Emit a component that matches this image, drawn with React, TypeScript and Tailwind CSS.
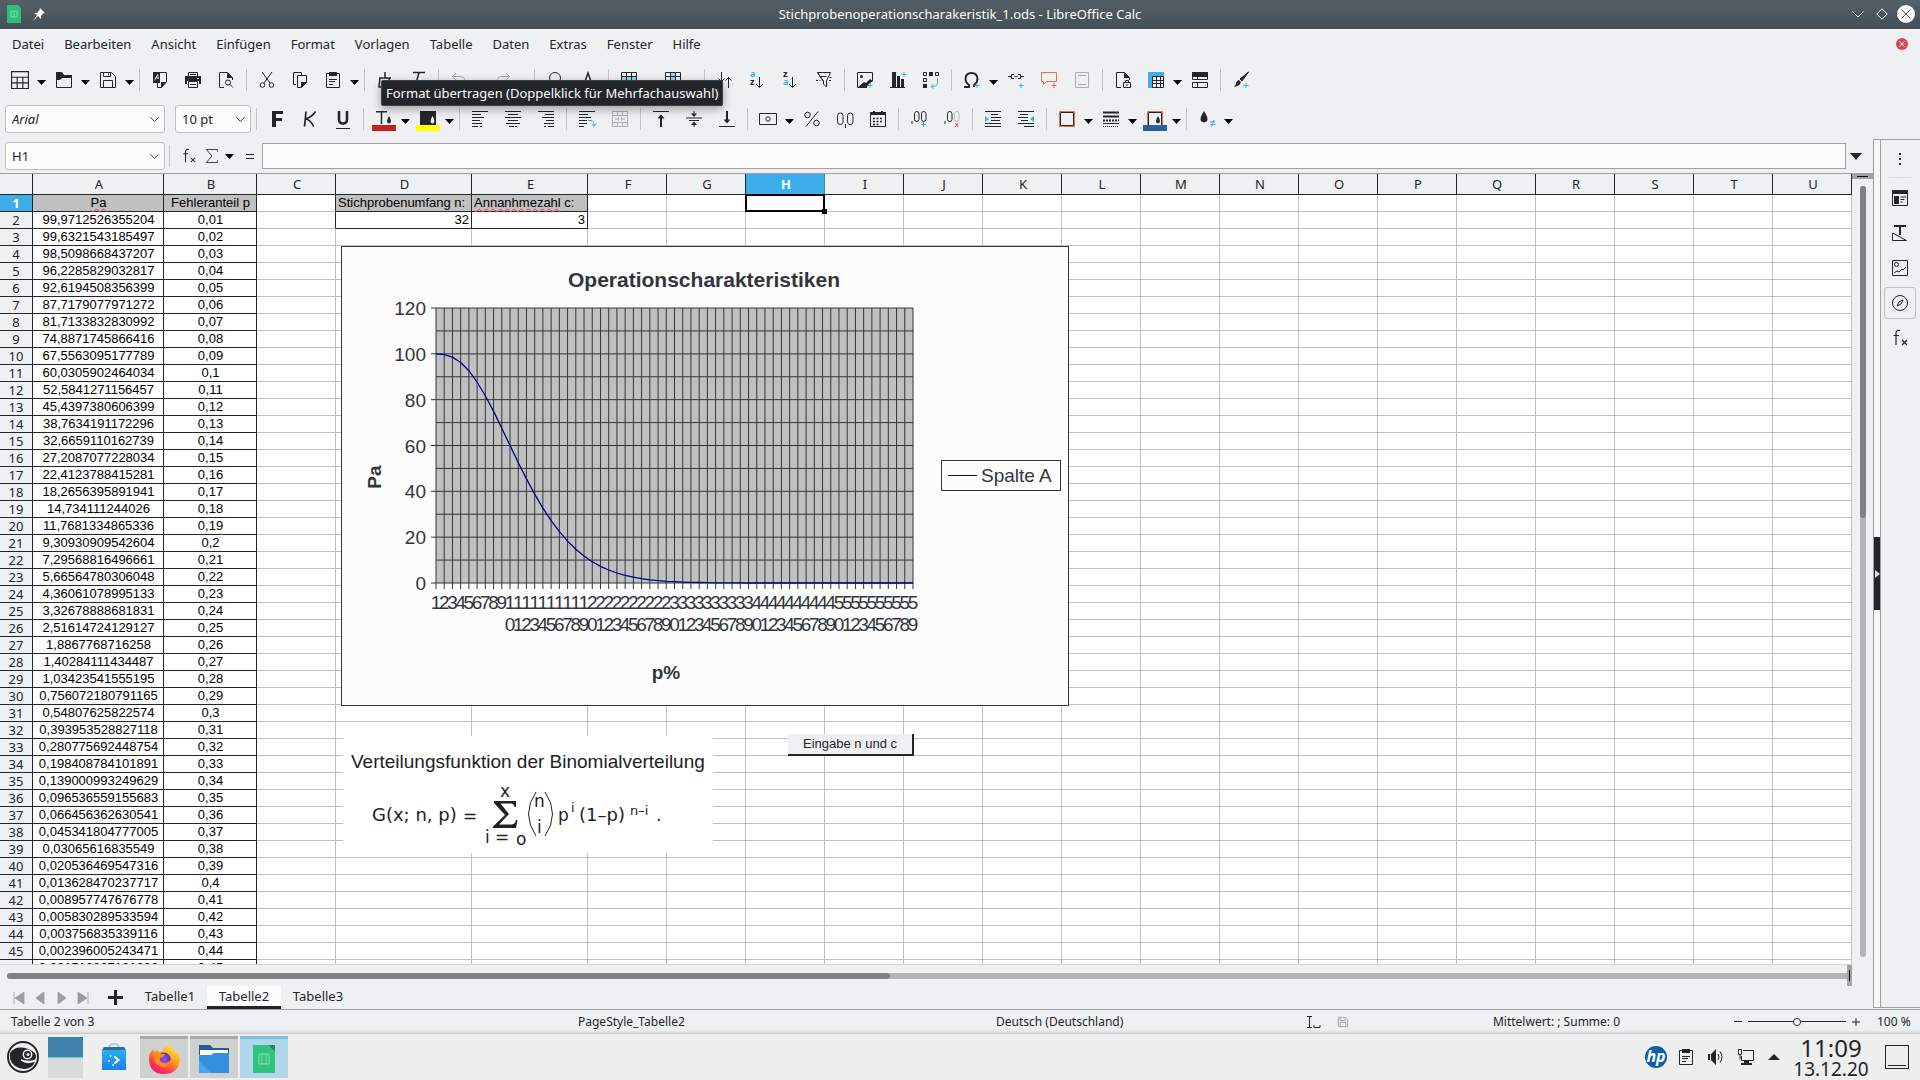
import type { ReactNode } from "react";
import { clsx } from "clsx";
import { ChevronDown } from "lucide-react";

const INK = "#232629";
const BLUE = "#3daee9";
const ORANGE = "#e9704a";

const paValues = [
  "99,9712526355204", "99,6321543185497", "98,5098668437207", "96,2285829032817", "92,6194508356399",
  "87,7179077971272", "81,7133832830992", "74,8871745866416", "67,5563095177789", "60,0305902464034",
  "52,5841271156457", "45,4397380606399", "38,7634191172296", "32,6659110162739", "27,2087077228034",
  "22,4123788415281", "18,2656395891941", "14,734111244026", "11,7681334865336", "9,30930909542604",
  "7,29568816496661", "5,66564780306048", "4,36061078995133", "3,32678888681831", "2,51614724129127",
  "1,8867768716258", "1,40284111434487", "1,03423541555195", "0,756072180791165", "0,54807625822574",
  "0,393953528827118", "0,280775692448754", "0,198408784101891", "0,139000993249629", "0,096536559155683",
  "0,066456362630541", "0,045341804777005", "0,03065616835549", "0,020536469547316", "0,013628470237717",
  "0,008957747676778", "0,005830289533594", "0,003756835339116", "0,002396005243471", "0,001512867121296",
];

const columns = "ABCDEFGHIJKLMNOPQRSTU".split("");
const rows = Array.from({ length: 46 }, (_, i) => i + 1);

function columnWidth(col: string) {
  if (col === "A") return "w-[131px]";
  if (col === "B") return "w-[93px]";
  if (col === "D") return "w-[136px]";
  if (col === "E") return "w-[116px]";
  return "w-[79px]";
}

/* ---------- icons ---------- */

function Ic({ children, size = 16, color = INK }: { children: ReactNode; size?: number; color?: string }) {
  return (
    <svg width={size} height={size} viewBox="0 0 16 16" fill="none" stroke={color} className="shrink-0 overflow-visible" aria-hidden="true">
      {children}
    </svg>
  );
}

const plus = <path d="M10.5 13.5h5M13 11v5" stroke={BLUE} />;

const ico = {
  newSheet: <Ic size={18}><path d="M.5.5h15v15H.5zM.5 5.5h15M.5 10.5h15M5.5 5.5v10M10.5 5.5v10" /></Ic>,
  open: <Ic><path d="M.5 1v14.5h15v-12h-8L5.5.5H.5z" /><path d="M0 0h6l2 3h8v3H6L4 8H1z" fill={INK} stroke="none" /></Ic>,
  save: <Ic><path d="M.5.5h11l4 4v11H.5zM3.5.5v4h7v-4M3.5 15.5v-7h9v7M8.5 1.5v2" /></Ic>,
  pdf: <Ic><path d="M5.5.5h9v9l-5 6h-4v-5" /><path d="M1 0h7v11H1z" fill={INK} stroke="none" /><path d="M2.5 8.5l3-6 1 4-3-1" stroke="#fff" strokeWidth="0.8" /><path d="M9 10h6l-6 6z" fill={INK} stroke="none" /></Ic>,
  print: <Ic><path d="M3.5 4V.5h9V4M5 2.5h6" /><path d="M0 4h16v8h-2V9H2v3H0z" fill={INK} stroke="none" /><path d="M3.5 9.5h9v6h-9zM5 12.5h6" /><path d="M12 6.5h2" stroke="#fff" /></Ic>,
  preview: <Ic><path d="M6 15.5H1.5V.5h8l5 5V8" /><path d="M9 0l6 6H9z" fill={INK} stroke="none" /><circle cx="10" cy="10.5" r="2.5" /><path d="M12 12.5l3 3" /></Ic>,
  cut: <Ic><path d="M3 0l8 11M13 0L5 11" /><circle cx="3.5" cy="13" r="2.3" /><circle cx="12.5" cy="13" r="2.3" /></Ic>,
  copy: <Ic><path d="M4 12.5H1.5V.5h8V3" /><path d="M5.5 3.5h9v7l-5 5h-4z" /><path d="M9 10h6l-6 6z" fill={INK} stroke="none" /></Ic>,
  paste: <Ic><path d="M1.5 1.5h13v14h-13zM4 7.5h8M4 9.5h6M4 12.5h4" /><path d="M4 0h8v4H4z" fill={INK} stroke="none" /></Ic>,
  clone: <Ic><path d="M8 0v6M2 6h12M3 6l-1 9h11l-1-9" strokeWidth="1.5" /></Ic>,
  clear: <Ic><path d="M3 .5h12M9 .5L5 15" strokeWidth="1.5" /></Ic>,
  undo: <Ic color="#a9abad"><path d="M5 1L1.5 4.5 5 8M2 4.5h7q5 0 5 5v3" /></Ic>,
  redo: <Ic color="#a9abad"><path d="M11 1l3.5 3.5L11 8M14 4.5H7q-5 0-5 5v3" /></Ic>,
  find: <Ic><circle cx="8" cy="6" r="5.5" /><path d="M12 10l4 5" /></Ic>,
  spell: <Ic><path d="M3 15L8 1l5 14M5 9h6" strokeWidth="1.5" /></Ic>,
  row: <Ic><path d="M1 5h14v4H1z" fill="#9bd3f0" stroke="none" /><path d="M.5.5h15v15H.5zM.5 4.5h15M.5 9.5h15M5.5.5v15M10.5.5v15" /></Ic>,
  col: <Ic><path d="M5 1h6v14H5z" fill="#9bd3f0" stroke="none" /><path d="M.5.5h15v15H.5zM.5 4.5h15M.5 9.5h15M5.5.5v15M10.5.5v15" /></Ic>,
  sort: <Ic><path d="M4.5 0v9M1.5 6.5l3 3 3-3M11.5 16V5M8.5 8.5l3-3 3 3" /></Ic>,
  az: <Ic><text x="0" y="5" fontSize="9" fontWeight="700" fill={BLUE} stroke="none" fontFamily="Noto Sans, sans-serif">a</text><text x="0" y="13" fontSize="9" fontWeight="700" fill={INK} stroke="none" fontFamily="Noto Sans, sans-serif">z</text><path d="M9.5 5v10M6 12l3.5 3.5L13 12" /></Ic>,
  za: <Ic><text x="0" y="5" fontSize="9" fontWeight="700" fill={INK} stroke="none" fontFamily="Noto Sans, sans-serif">z</text><text x="0" y="13" fontSize="9" fontWeight="700" fill={BLUE} stroke="none" fontFamily="Noto Sans, sans-serif">a</text><path d="M9.5 5v10M6 12l3.5 3.5L13 12" /></Ic>,
  filter: <Ic><path d="M1.5.5h13L10.5 9v6l-3-3V9zM1.500.500L7 9M4.5 4.500h6" /><path d="M0 8.5h2M3.5 8.5h1M13 8.5h2M13.5 5.5h2" /></Ic>,
  image: <Ic><path d="M10 15.5H.5V.5h15V9" /><path d="M1 15l6-5 2 1 4-4 3 2-4 3-2 3z" fill={INK} stroke="none" /><circle cx="4.5" cy="4.5" r="1.5" fill={INK} stroke="none" />{plus}</Ic>,
  chart: <Ic><path d="M0 15.5h15" /><path d="M2 0h4v15H2zM7 4h3v11H7zM11 7h3v8h-3z" fill={INK} stroke="none" /><path d="M11.5 2.5h5M14 0v5" stroke={BLUE} /></Ic>,
  pivot: <Ic><path d="M.5.5h3v3h-3zM12.5.5h3v3h-3zM.5 6.5h3v3h-3z" /><path d="M6 0h4v4H6zM0 12h4v4H0z" fill={INK} stroke="none" /><path d="M14.5 6v5q0 3.5-6 3.5M10.5 12L8 14.5 10.5 16.5" stroke={BLUE} /></Ic>,
  omega: <Ic><path d="M0 15h5v-2Q1.5 10.5 1.5 6.5 2 1 7.5 1T13.5 6.500Q13.5 10.500 10 13v2" strokeWidth="1.9" />{plus}</Ic>,
  link: <Ic><path d="M0 4.5h3M6.5 4.5h3M13 4.5h3M6 2.5H3.5v4H6M10 2.5h2.5v4H10" />{plus}</Ic>,
  comment: <Ic color={ORANGE}><path d="M.5.5h15v9H5.5l-3 3v-3h-2z" /><path d="M10.5 13.5h5M13 11v5" /></Ic>,
  header: <Ic color="#a9abad"><path d="M1.5.5h13v15h-13zM4 3.5h8M4 12.5h8" /></Ic>,
  protect: <Ic><path d="M6 15.5H1.5V.5h8l5 5V8" /><path d="M9 0l6 6H9z" fill={INK} stroke="none" /><path d="M8.5 10.5h7v5h-7zM10.5 10V8.5h3V10M12 12v2" /></Ic>,
  freeze: <Ic><path d="M0 0h16v5H5v11H0z" fill={BLUE} stroke="none" /><path d="M4.5 4.5h11v11h-11zM4.5 8.5h11M4.5 11.5h11M8.5 4.5v11M12.5 4.5v11" /></Ic>,
  split: <Ic><path d="M0 0h16v5H0z" fill={INK} stroke="none" /><path d="M.5 5v2.5h15V5M5.5 5v2.5M.5 10.5h15v5H.5zM5.5 10.5v5" /></Ic>,
  brush: <Ic><path d="M15.5 0L7 7l2 2z" fill={INK} strokeLinejoin="round" /><path d="M6 8l2 2q-1 4-7 5 2-2 2-4t3-3z" fill={INK} stroke="none" />{plus}</Ic>,

  bold: <Ic><path d="M3 0h11v3H7v4h6v3H7v6H3z" fill={INK} stroke="none" /></Ic>,
  italic: <Ic><path d="M4 .5L2.5 15.500M13.5.5Q10 6 3.5 8 8 8 11.5 15.500" strokeWidth="1.7" /></Ic>,
  underline: <Ic><path d="M4 0v8q0 4.500 4 4.500t4-4.500V0" strokeWidth="2.5" /><path d="M1 17.5h14" /></Ic>,
  fontColor: <Ic><path d="M0 .8h11M5.5 1v12" strokeWidth="1.5" /><path d="M13 5q4 7 0 7.5-4-.5 0-7.5z" fill={INK} stroke="none" /><path d="M-4 14h24v6H-4z" fill="#c9211e" stroke="none" /></Ic>,
  highlight: <Ic><path d="M0 0h16v14H0z" fill={INK} stroke="none" /><path d="M12.5 5q4 7 0 7.5-4-.5 0-7.5z" fill="#eee" stroke="none" /><path d="M-4 14h24v6H-4z" fill="#ffff00" stroke="none" /></Ic>,
  left: <Ic><path d="M0 .5h16M0 3.5h9M0 6.5h12M0 9.5h8M0 12.5h10M0 15.5h6M8 15.5h2" /></Ic>,
  center: <Ic><path d="M0 .5h16M3 3.5h10M0 6.5h16M3 9.5h10M1 12.5h14M4 15.5h5M10 15.5h2" /></Ic>,
  right: <Ic><path d="M0 .5h16M7 3.5h9M4 6.5h12M8 9.5h8M6 12.5h10M6 15.5h2M10 15.5h6" /></Ic>,
  wrap: <Ic><path d="M0 .5h16M0 3.5h9M0 6.5h12M0 9.5h8M0 12.5h8M0 15.5h5" /><path d="M9 9.5h3q3 0 3 5M12.5 12.5l2.5 3 2-3" stroke={BLUE} /></Ic>,
  merge: <Ic color="#a9abad"><path d="M.5.5h15v15H.5zM.5 4.5h15M.5 11.5h15M5.5.5v4M10.5.5v4M5.5 11.5v4M10.5 11.5v4M3 8h3M10 8h3M6.5 6v4M9.5 6v4" /></Ic>,
  top: <Ic><path d="M0 .5h16" /><path d="M8 4v12" strokeWidth="2" /><path d="M4.5 7.5L8 3.500l3.5 4z" fill={INK} stroke="none" /></Ic>,
  middle: <Ic><path d="M0 7h16M3 9.5h10M8 0v4M8 12v4" /><path d="M5 2.5h6L8 6zM5 14h6l-3-3.5z" fill={INK} stroke="none" /></Ic>,
  bottom: <Ic><path d="M0 15.5h16" /><path d="M8 0v10" strokeWidth="2" /><path d="M4.5 8.5h7L8 12.5z" fill={INK} stroke="none" /></Ic>,
  currency: <Ic><path d="M-.5 2.5h17v11h-17z" /><circle cx="8" cy="8" r="2.2" /></Ic>,
  percent: <Ic><circle cx="3.5" cy="4" r="2.8" /><circle cx="12.5" cy="12" r="2.8" /><path d="M14 .5L2 15.500" /></Ic>,
  number: <Ic><rect x=".5" y="2" width="5.5" height="11.5" rx="2.7" /><rect x="10.5" y="2" width="5.5" height="11.5" rx="2.7" /><path d="M8.5 13v4" /></Ic>,
  date: <Ic><path d="M.5 1.5h15v14H.5z" /><path d="M0 1h3V0h2v1h6V0h2v1h3v3H0z" fill={INK} stroke="none" /><path d="M3 7.5h10M3 10.5h10M3 13.5h6" strokeDasharray="2 1.5" strokeWidth="1.5" /></Ic>,
  addDec: <Ic><rect x="3.5" y=".5" width="4.5" height="10" rx="2.2" /><rect x="10.5" y=".5" width="4.5" height="10" rx="2.2" /><path d="M1 10v3" /><path d="M10 13.5h5M12.5 11v5" stroke={BLUE} /></Ic>,
  delDec: <Ic><rect x="3.5" y=".5" width="4.5" height="10" rx="2.2" /><rect x="10.5" y=".5" width="4.5" height="10" rx="2.2" stroke="#b5b7b9" /><path d="M1 10v3" /><path d="M11 12l3.5 4M14.5 12L11 16" stroke="#da4453" /></Ic>,
  indent: <Ic><path d="M0 .5h16M6 3.5h7M6 6.5h10M6 9.5h9M0 12.5h16M0 15.5h16" /><path d="M0 5v6l4-3z" fill={BLUE} stroke="none" /></Ic>,
  outdent: <Ic><path d="M0 .5h16M2 3.5h8M0 6.5h10M3 9.5h7M0 12.5h16M6 15.5h10" /><path d="M16 5v6l-4-3z" fill={BLUE} stroke="none" /></Ic>,
  border: <Ic><path d="M.5.5h15v15H.5z" stroke={ORANGE} /><path d="M1.5 1.5h13v13h-13z" /></Ic>,
  lineStyle: <Ic><path d="M0 1.5h16M0 5.5h16" strokeWidth="2" /><path d="M0 9.5h16" strokeDasharray="2 1" strokeWidth="2" /><path d="M0 12.5h16" /><path d="M0 15.5h16" strokeDasharray="1 1" /></Ic>,
  borderColor: <Ic><path d="M.5.5h15v15H.5z" stroke={ORANGE} /><path d="M1.5 1.5h13v13h-13z" /><path d="M11 5q4 7 0 7.5-4-.5 0-7.5z" fill={INK} stroke="none" /><path d="M-4 14h24v6H-4z" fill="#2a6099" stroke="none" /></Ic>,
  cond: <Ic><path d="M5 0q7 10.5 0 11.5Q-2 10.5 5 0z" fill={INK} stroke="none" /><path d="M11 11h5.5M11 13.5h5.5M15 9l-2.5 7" stroke={BLUE} /></Ic>,
};

type Tool = "|" | { icon: ReactNode; label: string; menu?: boolean };

const standardTools: Tool[] = [
  { icon: ico.newSheet, label: "Neu", menu: true }, { icon: ico.open, label: "Öffnen", menu: true },
  { icon: ico.save, label: "Speichern", menu: true }, "|",
  { icon: ico.pdf, label: "Als PDF exportieren" }, { icon: ico.print, label: "Drucken" }, { icon: ico.preview, label: "Druckvorschau" }, "|",
  { icon: ico.cut, label: "Ausschneiden" }, { icon: ico.copy, label: "Kopieren" }, { icon: ico.paste, label: "Einfügen", menu: true }, "|",
  { icon: ico.clone, label: "Format übertragen" }, { icon: ico.clear, label: "Formatierung löschen" }, "|",
  { icon: ico.undo, label: "Rückgängig", menu: true }, { icon: ico.redo, label: "Wiederherstellen", menu: true }, "|",
  { icon: ico.find, label: "Suchen und Ersetzen" }, { icon: ico.spell, label: "Rechtschreibung" }, "|",
  { icon: ico.row, label: "Zeile", menu: true }, { icon: ico.col, label: "Spalte", menu: true }, "|",
  { icon: ico.sort, label: "Sortieren" }, { icon: ico.az, label: "Aufsteigend" }, { icon: ico.za, label: "Absteigend" }, { icon: ico.filter, label: "AutoFilter" }, "|",
  { icon: ico.image, label: "Bild" }, { icon: ico.chart, label: "Diagramm" }, { icon: ico.pivot, label: "Pivot-Tabelle" }, "|",
  { icon: ico.omega, label: "Sonderzeichen", menu: true }, { icon: ico.link, label: "Hyperlink" }, { icon: ico.comment, label: "Kommentar" }, { icon: ico.header, label: "Kopf- und Fußzeilen" }, "|",
  { icon: ico.protect, label: "Druckbereich" }, { icon: ico.freeze, label: "Fixieren", menu: true }, { icon: ico.split, label: "Fenster teilen" }, "|",
  { icon: ico.brush, label: "Zeichenfunktionen" },
];

const formatTools: Tool[] = [
  "|", { icon: ico.bold, label: "Fett" }, { icon: ico.italic, label: "Kursiv" }, { icon: ico.underline, label: "Unterstrichen" }, "|",
  { icon: ico.fontColor, label: "Schriftfarbe", menu: true }, { icon: ico.highlight, label: "Hintergrundfarbe", menu: true }, "|",
  { icon: ico.left, label: "Linksbündig" }, { icon: ico.center, label: "Zentriert" }, { icon: ico.right, label: "Rechtsbündig" }, "|",
  { icon: ico.wrap, label: "Textumbruch" }, { icon: ico.merge, label: "Zellen verbinden" }, "|",
  { icon: ico.top, label: "Oben" }, { icon: ico.middle, label: "Mitte" }, { icon: ico.bottom, label: "Unten" }, "|",
  { icon: ico.currency, label: "Währung", menu: true }, { icon: ico.percent, label: "Prozent" }, { icon: ico.number, label: "Zahl" }, { icon: ico.date, label: "Datum" }, "|",
  { icon: ico.addDec, label: "Dezimalstelle hinzufügen" }, { icon: ico.delDec, label: "Dezimalstelle löschen" }, "|",
  { icon: ico.indent, label: "Einzug erhöhen" }, { icon: ico.outdent, label: "Einzug verringern" }, "|",
  { icon: ico.border, label: "Umrandung", menu: true }, { icon: ico.lineStyle, label: "Linienstil", menu: true }, { icon: ico.borderColor, label: "Linienfarbe", menu: true }, "|",
  { icon: ico.cond, label: "Bedingte Formatierung", menu: true },
];

function Triangle() {
  return (
    <svg width="10" height="5" viewBox="0 0 10 5" className="shrink-0 overflow-visible" aria-hidden="true">
      <path d="M0 0h9L4.5 5z" fill="#000" />
    </svg>
  );
}

function Tools({ items }: { items: Tool[] }) {
  return (
    <>
      {items.map((t, i) =>
        t === "|" ? (
          <div key={i} className="flex w-2 shrink-0 justify-center">
            <div className="h-[22px] w-px bg-[#c3c5c6]" />
          </div>
        ) : (
          <div key={i} className="flex shrink-0 items-center">
            <button type="button" aria-label={t.label} className="flex h-8 w-[33px] items-center justify-center">{t.icon}</button>
            {t.menu && (
              <button type="button" aria-label={`${t.label}, Auswahl`} className="flex h-8 w-[11px] items-center justify-center pt-1"><Triangle /></button>
            )}
          </div>
        )
      )}
    </>
  );
}

function Combo({ label, value, className, italic }: { label: string; value: string; className: string; italic?: boolean }) {
  return (
    <label className={clsx("relative shrink-0", className)}>
      <select aria-label={label} className={clsx("h-7 w-full appearance-none rounded-[3px] border border-[#bcbebf] bg-[#fcfcfc] pl-[6px]", italic && "italic")}>
        <option>{value}</option>
      </select>
      <ChevronDown size={15} strokeWidth={1.5} className="pointer-events-none absolute right-[3px] top-[7px]" />
    </label>
  );
}

/* ---------- window chrome ---------- */

function TitleBar() {
  return (
    <header className="relative flex h-[29px] shrink-0 items-center justify-center bg-linear-to-b from-[#556069] to-[#454e56] text-[#fcfcfc]">
      <div className="absolute left-[7px] top-[5px] flex items-center gap-3">
        <svg width="14" height="18" viewBox="0 0 14 18" aria-hidden="true">
          <path d="M0 0h11l3 3v15H0z" fill="#2cbf7c" />
          <path d="M4 6h6v6H4zM7 6v6" stroke="#7ddcab" fill="none" />
        </svg>
        <svg width="12" height="13" viewBox="0 0 12 13" aria-hidden="true">
          <path d="M7 0l5 5-2 .5-2 2.5V11L5 8l-5 5 4-6-3-2h3l2.5-3z" fill="#fff" />
        </svg>
      </div>
      <h1 className="pb-px text-[13px]">Stichprobenoperationscharakeristik_1.ods - LibreOffice Calc</h1>
      <div className="absolute right-[5px] top-[5px] flex items-center gap-[6px]">
        <button type="button" aria-label="Minimieren" className="flex size-[18px] items-center justify-center">
          <svg width="12" height="7" viewBox="0 0 12 7"><path d="M.5.5L6 6 11.5.5" fill="none" stroke="#fff" /></svg>
        </button>
        <button type="button" aria-label="Maximieren" className="flex size-[18px] items-center justify-center">
          <svg width="12" height="12" viewBox="0 0 12 12"><path d="M6 .8L11.2 6 6 11.2.8 6z" fill="none" stroke="#fff" /></svg>
        </button>
        <button type="button" aria-label="Schließen" className="flex size-[18px] items-center justify-center rounded-full bg-white">
          <svg width="10" height="10" viewBox="0 0 10 10"><path d="M.5.5l9 9M9.5.5l-9 9" stroke="#475057" /></svg>
        </button>
      </div>
    </header>
  );
}

function MenuBar() {
  const items = ["Datei", "Bearbeiten", "Ansicht", "Einfügen", "Format", "Vorlagen", "Tabelle", "Daten", "Extras", "Fenster", "Hilfe"];
  return (
    <nav className="flex h-[31px] shrink-0 items-center px-3 pb-px">
      <div className="flex gap-5">
        {items.map((m) => <button type="button" key={m}>{m}</button>)}
      </div>
      <button type="button" aria-label="Dokument schließen" className="ml-auto flex size-3 items-center justify-center rounded-full bg-[#da4453]">
        <svg width="6" height="6" viewBox="0 0 6 6"><path d="M.5.5l5 5M5.5.5l-5 5" stroke="#fff" /></svg>
      </button>
    </nav>
  );
}

/* ---------- sheet ---------- */

// word with the spell checker's red wave under it
function Misspelled({ children }: { children: string }) {
  return <span className="underline decoration-[#da4453] decoration-wavy decoration-1 underline-offset-1">{children}</span>;
}

function cellContent(row: number, col: string): ReactNode {
  if (row === 1) {
    if (col === "A") return <Misspelled>Pa</Misspelled>;
    if (col === "B") return "Fehleranteil p";
    if (col === "D") return "Stichprobenumfang n:";
    if (col === "E") return <><Misspelled>Annanhmezahl</Misspelled> c:</>;
    return null;
  }
  if (col === "A") return paValues[row - 2];
  if (col === "B") return String((row - 1) / 100).replace(".", ",");
  if (row === 2 && col === "D") return "32";
  if (row === 2 && col === "E") return "3";
  return null;
}

function Cell({ row, col }: { row: number; col: string }) {
  const inData = col === "A" || col === "B";
  const inParams = row <= 2 && (col === "D" || col === "E");
  const darkRight = inData || inParams || (row <= 2 && col === "C");
  return (
    <td
      className={clsx(
        "h-[17px] overflow-visible whitespace-nowrap border-b border-r py-0",
        inData || inParams ? "border-b-[#232629]" : "border-b-[#c0c0c0]",
        darkRight ? "border-r-[#232629]" : "border-r-[#c0c0c0]",
        inData && "pl-px pr-0 text-center",
        inParams && (row === 1 ? "pl-[2px] pr-0 text-left" : "pl-0 pr-[2px] text-right"),
        !inData && !inParams && "px-0",
        row === 1 && (inData || inParams) && "bg-[#c0c0c0]",
        row === 1 && col === "H" && "relative"
      )}
    >
      {cellContent(row, col)}
      {row === 1 && col === "H" && (
        <div className="absolute -bottom-px -left-px -right-px -top-px z-10 border-2 border-black">
          <div className="absolute -bottom-[4px] -right-[4px] size-[5px] bg-black" />
        </div>
      )}
    </td>
  );
}

function Grid() {
  return (
    <table className="w-[1852px] table-fixed border-separate border-spacing-0 bg-white font-['Liberation_Sans',Arial,sans-serif] text-[13px] leading-4 text-black">
      <thead className="font-['Noto_Sans',sans-serif] text-[#232629]">
        <tr className="h-[21px]">
          <th className="w-[33px] border-b border-r border-[#232629] bg-[#eff0f1] p-0" aria-label="Alles auswählen" />
          {columns.map((c) => (
            <th
              key={c}
              scope="col"
              className={clsx(
                "border-b border-r border-b-[#232629] py-0 pl-[2px] pr-0 leading-5",
                columnWidth(c),
                c === "H" ? "border-r-[#2f8fc4] bg-[#3daee9] font-bold text-white" : "border-r-[#232629] bg-[#eff0f1] font-normal"
              )}
            >
              {c}
            </th>
          ))}
        </tr>
      </thead>
      <tbody>
        {rows.map((r) => (
          <tr key={r} className="h-[17px]">
            <th
              scope="row"
              className={clsx(
                "border-b border-r border-[#232629] p-0 font-['Noto_Sans',sans-serif]",
                r === 1 ? "bg-[#3daee9] font-bold text-white" : "bg-[#eff0f1] font-normal text-[#232629]"
              )}
            >
              {r}
            </th>
            {columns.map((c) => <Cell key={c} row={r} col={c} />)}
          </tr>
        ))}
      </tbody>
    </table>
  );
}

// acceptance probability in percent: at most c defects in a sample of n
function acceptance(p: number, n = 32, c = 3) {
  let sum = 0;
  let binom = 1;
  for (let i = 0; i <= c; i++) {
    sum += binom * p ** i * (1 - p) ** (n - i);
    binom = (binom * (n - i)) / (i + 1);
  }
  return sum * 100;
}

const PLOT = { left: 95, right: 572, top: 62, bottom: 337 };
const STEPS = 58;
const plotX = (i: number) => PLOT.left + (i * (PLOT.right - PLOT.left)) / STEPS;
const plotY = (v: number) => PLOT.bottom - (v * (PLOT.bottom - PLOT.top)) / 120;

function Chart() {
  const ticks = Array.from({ length: STEPS + 1 }, (_, i) => i);
  const curve = ticks.map((i) => `${plotX(i).toFixed(1)},${plotY(acceptance((i + 1) / 100)).toFixed(1)}`).join(" ");
  return (
    <svg
      width="728"
      height="460"
      viewBox="0 0 728 460"
      role="img"
      aria-label="Operationscharakteristiken"
      className="absolute left-[341px] top-[72px] font-['Liberation_Sans',Arial,sans-serif] text-[19px]"
      fill="#31363b"
    >
      <rect x=".5" y=".5" width="727" height="459" fill="#fcfcfc" stroke="#31363b" />
      <text x="363" y="41" textAnchor="middle" fontSize="21" fontWeight="700">Operationscharakteristiken</text>
      <rect x={PLOT.left} y={PLOT.top} width={PLOT.right - PLOT.left} height={PLOT.bottom - PLOT.top} fill="#c0c0c0" />
      <g stroke="#31363b">
        {ticks.map((i) => <path key={i} d={`M${plotX(i)} ${PLOT.top}V${PLOT.bottom + 6}`} />)}
        {Array.from({ length: 13 }, (_, i) => (
          <path key={i} d={`M${i % 2 ? PLOT.left : PLOT.left - 5} ${plotY(i * 10)}H${PLOT.right}`} />
        ))}
      </g>
      {[0, 20, 40, 60, 80, 100, 120].map((v) => (
        <text key={v} x="85" y={plotY(v) + 7} textAnchor="end">{v}</text>
      ))}
      {ticks.map((i) => {
        const [first, second] = String(i + 1);
        return (
          <g key={i} textAnchor="middle">
            <text x={plotX(i)} y="363">{first}</text>
            {second && <text x={plotX(i)} y="385">{second}</text>}
          </g>
        );
      })}
      <polyline points={curve} fill="none" stroke="#000080" strokeWidth="1.3" />
      <text transform="translate(40 231) rotate(-90)" textAnchor="middle" fontWeight="700">Pa</text>
      <text x="325" y="433" textAnchor="middle" fontWeight="700">p%</text>
      <rect x="600.5" y="214.5" width="119" height="30" fill="#fcfcfc" stroke="#31363b" />
      <path d="M607 229.5h29" stroke="#000080" />
      <text x="640" y="236">Spalte A</text>
    </svg>
  );
}

function Formula() {
  return (
    <svg
      width="370"
      height="117"
      viewBox="0 0 370 117"
      role="img"
      aria-label="Verteilungsfunktion der Binomialverteilung"
      className="absolute left-[343px] top-[562px] bg-white font-['DejaVu_Sans','Noto_Sans',sans-serif] text-[17px]"
      fill="#222"
    >
      <text x="8" y="32" className="font-['Liberation_Sans',Arial,sans-serif] text-[19px]">Verteilungsfunktion der Binomialverteilung</text>
      <text x="29" y="85" fontSize="18">G(x; n, p)</text>
      <text x="120" y="86">=</text>
      <text x="157" y="61">x</text>
      <path d="M151 65h22v6h-1.5q-.5-3.500-4-3.500h-10L166 78l-10 10.5h12q4 0 5-4.500h1.5l-1.5 8h-23v-1.500L162 79 151 67z" />
      <g fontSize="17">
        <text x="142" y="107">i</text>
        <text x="152" y="107">=</text>
        <text x="173" y="109">o</text>
      </g>
      <path d="M193 56q-15 22 0 44M202 56q15 22 0 44" fill="none" stroke="#222" />
      <text x="191" y="71">n</text>
      <text x="194" y="97">i</text>
      <text x="215" y="85">p</text>
      <text x="228" y="76" fontSize="13">i</text>
      <text x="236" y="85" fontSize="18">(1–p)</text>
      <text x="287" y="79" fontSize="13">n–i</text>
      <text x="313" y="85">.</text>
    </svg>
  );
}

function VerticalScrollbar() {
  return (
    <div className="flex w-[21px] shrink-0 flex-col items-center">
      <div className="flex h-[6px] w-full items-center justify-center bg-[#a0a2a4]">
        <div className="h-px w-[11px] bg-black" />
      </div>
      <div className="mb-2 mt-[7px] w-[6px] flex-1 rounded-full bg-[#b2b4b5]">
        <div className="h-[43%] rounded-full bg-[#808183]" />
      </div>
    </div>
  );
}

function SheetTabs() {
  const arrows = ["M4 1v12M14 1v12L5 7z", "M12 1v12L4 7z", "M4 1v12l8-6z", "M12 1v12M2 1v12l9-6z"];
  const names = ["Erste Tabelle", "Vorherige Tabelle", "Nächste Tabelle", "Letzte Tabelle"];
  return (
    <div className="flex h-[23px] shrink-0 items-center pl-[7px]">
      {arrows.map((d, i) => (
        <button type="button" key={d} aria-label={names[i]} className="flex w-[22px] justify-center">
          <svg width="16" height="14" viewBox="0 0 16 14" fill="#9b9d9f" stroke="#9b9d9f" strokeWidth="0.8"><path d={d} /></svg>
        </button>
      ))}
      <button type="button" aria-label="Tabelle hinzufügen" className="ml-[13px] flex w-[15px] justify-center">
        <svg width="15" height="15" viewBox="0 0 15 15"><path d="M7.5 0v15M0 7.5h15" stroke={INK} strokeWidth="3" /></svg>
      </button>
      <div role="tablist" className="ml-[10px] flex h-full">
        {["Tabelle1", "Tabelle2", "Tabelle3"].map((t) => (
          <button
            type="button"
            role="tab"
            aria-selected={t === "Tabelle2"}
            key={t}
            className={clsx("h-full w-[74px] border-b-[3px] leading-5", t === "Tabelle2" ? "border-[#232629] bg-[#fcfcfc]" : "border-transparent")}
          >
            {t}
          </button>
        ))}
      </div>
    </div>
  );
}

function FxIcon({ size = 16 }: { size?: number }) {
  return <Ic size={size}><path d="M8 .5q-4-1-4 3V15M1.5 5.5H7M10 10l5 5M15 10l-5 5" strokeWidth="1.2" /></Ic>;
}

function Sidebar() {
  const decks = [
    { label: "Eigenschaften", icon: <Ic><path d="M.5.5h15v15H.5z" /><path d="M0 0h16v4H0zM2 6h5v8H2z" fill={INK} stroke="none" /><path d="M8.5 7h6M8.5 9.5h4M8.5 12h2" /></Ic> },
    { label: "Formatvorlagen", icon: <Ic><path d="M2 1h12M8 1v9" strokeWidth="2" /><path d="M.5 8v7.5h14z" /></Ic> },
    { label: "Galerie", icon: <Ic><path d="M.5.5h15v15H.5zM2 13l3-2 2 1 3-3 1 1 3-3" /><circle cx="4.5" cy="4.5" r="2" /></Ic> },
    { label: "Navigator", icon: <Ic><circle cx="8" cy="8" r="7.5" /><path d="M11 5L9 9l-4 2 2-4z" /></Ic>, active: true },
    { label: "Funktionen", icon: <FxIcon /> },
  ];
  return (
    <aside className="mb-px flex w-[47px] shrink-0 border-b border-t border-[#9fa1a3]">
      <div className="flex w-2 flex-col justify-center border-x border-[#9fa1a3] bg-[#f6f7f7]">
        <button type="button" aria-label="Seitenleiste ausblenden" className="flex h-[73px] items-center justify-center bg-[#232629]">
          <svg width="5" height="8" viewBox="0 0 5 8"><path d="M0 0l5 4-5 4z" fill="#ddd" /></svg>
        </button>
      </div>
      <div className="flex flex-1 flex-col items-center pr-px pt-[9px]">
        <button type="button" aria-label="Seitenleisteneinstellungen" className="flex h-5 items-center">
          <svg width="2" height="14" viewBox="0 0 2 14" fill={INK}><path d="M0 1h2v2H0zM0 6h2v2H0zM0 11h2v2H0z" /></svg>
        </button>
        <div className="mb-1 mt-2 h-px w-[22px] bg-[#dcdddf]" />
        <div className="flex flex-col gap-[3px]">
          {decks.map((d) => (
            <button
              type="button"
              key={d.label}
              aria-label={d.label}
              className={clsx("flex size-8 items-center justify-center rounded-[3px] border", d.active ? "border-[#bcbebf]" : "border-transparent")}
            >
              {d.icon}
            </button>
          ))}
        </div>
      </div>
    </aside>
  );
}

function StatusBar() {
  return (
    <footer className="relative z-10 flex h-[25px] shrink-0 items-center border-b border-t border-b-[#c9cbcb] border-t-[#9fa1a3] text-xs shadow-[inset_0_-3px_3px_-2px_rgba(0,0,0,0.12)]">
      <div className="w-[297px] pl-[11px]">Tabelle 2 von 3</div>
      <div className="w-[271px]" />
      <div className="w-[321px] pl-[10px]">PageStyle_Tabelle2</div>
      <div className="flex-1 pl-[107px]">Deutsch (Deutschland)</div>
      <button type="button" aria-label="Einfügemodus" className="flex w-[30px] justify-center">
        <Ic><path d="M2 2.5h5M2 13.5h5M4.5 2.5v11M9 11v2.5h6V11" /></Ic>
      </button>
      <button type="button" aria-label="Dokument gespeichert" className="flex w-[30px] justify-center">
        <Ic size={10} color="#a9abad"><path d="M.5.5h11l4 4v11H.5zM3.5.5v5h8v-5M3.5 15.5v-7h9v7" strokeWidth="1.6" /></Ic>
      </button>
      <div className="w-[30px]" />
      <div className="w-[337px] text-center">Mittelwert: ; Summe: 0</div>
      <div className="flex w-[143px] items-center justify-center gap-[6px]">
        <button type="button" aria-label="Verkleinern" className="h-px w-2 bg-[#232629]" />
        <input
          type="range"
          aria-label="Maßstab"
          defaultValue={50}
          className="h-px w-[98px] appearance-none bg-[#232629] [&::-webkit-slider-thumb]:size-2 [&::-webkit-slider-thumb]:appearance-none [&::-webkit-slider-thumb]:rounded-full [&::-webkit-slider-thumb]:border [&::-webkit-slider-thumb]:border-[#232629] [&::-webkit-slider-thumb]:bg-[#fcfcfc]"
        />
        <button type="button" aria-label="Vergrößern">
          <svg width="8" height="8" viewBox="0 0 8 8"><path d="M4 0v8M0 4h8" stroke={INK} /></svg>
        </button>
      </div>
      <div className="w-[52px] pl-[9px]">100 %</div>
    </footer>
  );
}

/* ---------- desktop panel ---------- */

function Geeko() {
  return (
    <svg width="32" height="32" viewBox="0 0 32 32" aria-hidden="true">
      <circle cx="16" cy="16" r="15" fill="#eff0f1" stroke={INK} strokeWidth="2" />
      <path d="M3 12q4-6 11-5.500 6 0 12 4 2.500 1 3 4.500 0 4-3 4.500-5 1.500-12-.5 4 5 14 2-3 7-11 7Q6 27 3 18z" fill={INK} />
      <circle cx="20.5" cy="13.5" r="4.2" fill={INK} stroke="#eff0f1" strokeWidth="1.5" />
      <circle cx="21" cy="13.5" r="1.5" fill="#eff0f1" />
      <path d="M14 19q6 2.500 14 .5" fill="none" stroke="#eff0f1" strokeWidth="1.5" />
    </svg>
  );
}

function Firefox() {
  return (
    <svg width="32" height="32" viewBox="0 0 32 32" aria-hidden="true">
      <defs>
        <linearGradient id="fx-flame" x1="0.8" y1="0" x2="0.2" y2="1">
          <stop offset="0" stopColor="#fff44f" />
          <stop offset="0.45" stopColor="#ff9a1f" />
          <stop offset="0.75" stopColor="#ff3750" />
          <stop offset="1" stopColor="#e31587" />
        </linearGradient>
        <radialGradient id="fx-globe">
          <stop offset="0" stopColor="#9059ff" />
          <stop offset="1" stopColor="#5b2fb5" />
        </radialGradient>
      </defs>
      <path d="M2 10l3-4 1 3 3-2 2 2 4-1q1-5 5-8 1 4 5 6l2 1q5 5 5 10Q30 31 16 31T1 17q0-4 1-7z" fill="url(#fx-flame)" />
      <circle cx="16" cy="16" r="6.5" fill="url(#fx-globe)" />
      <path d="M5 10q5-2 8 1h4q-1 3-5 4-1 4 4 5 4 0 6-3-1 8-8 7-9-2-9-14z" fill="#ff8a1f" />
    </svg>
  );
}

function CalcDoc() {
  return (
    <svg width="22" height="28" viewBox="0 0 22 28" aria-hidden="true">
      <path d="M0 0h15l7 7v21H0z" fill="#2fc380" />
      <path d="M15 0h7v7z" fill="#1f8b61" />
      <path d="M6 9h10v10H6zM9 9v10M13 9v10" fill="none" stroke="#86dfb2" />
    </svg>
  );
}

function Taskbar() {
  return (
    <div className="flex h-[46px] shrink-0 items-center bg-[#edeeed] pl-[7px] pr-[11px]">
      <button type="button" aria-label="Anwendungsmenü"><Geeko /></button>
      <div className="ml-[9px] flex h-[41px] w-[35px] flex-col">
        <button type="button" aria-label="Arbeitsfläche 1" className="flex-1 border-b border-[#7cc1e3] bg-[#3f81a8]" />
        <button type="button" aria-label="Arbeitsfläche 2" className="flex-1 bg-[#d9dbda]" />
      </div>
      <button type="button" aria-label="Discover" className="ml-[19px]">
        <svg width="24" height="28" viewBox="0 0 24 28">
          <defs>
            <linearGradient id="bag" x1="0" y1="0" x2="0" y2="1">
              <stop offset="0" stopColor="#23b2f5" />
              <stop offset="1" stopColor="#1d80f0" />
            </linearGradient>
          </defs>
          <path d="M7 8V5q0-4 5-4t5 4v3" fill="none" stroke="#8fc9e8" strokeWidth="1.5" />
          <path d="M2 4h20l2 3H0z" fill="#2c6e93" />
          <path d="M0 7h24v20H0z" fill="url(#bag)" />
          <path d="M13 14l3.5 3-3.500 3" fill="none" stroke="#fff" strokeWidth="2" strokeLinecap="round" />
          <path d="M8.500 13h.1M7 18h.1M11 22h.1" fill="none" stroke="#cfeaff" strokeWidth="2" strokeLinecap="round" />
        </svg>
      </button>
      <div className="ml-[14px] flex gap-[2px]">
        <button type="button" aria-label="Firefox" className="flex h-[42px] w-12 items-center justify-center border-t-[3px] border-[#a8aaa9] bg-[#cfd1d0]"><Firefox /></button>
        <button type="button" aria-label="Dolphin" className="flex h-[42px] w-12 items-center justify-center border-t-[3px] border-[#a8aaa9] bg-[#cfd1d0]">
          <svg width="30" height="28" viewBox="0 0 30 28">
            <path d="M0 0h11l3 3h16v10H0z" fill="#1e5f92" />
            <path d="M1 5h28v6H1z" fill="#fff" />
            <path d="M0 10h12l3-2h15v20H0z" fill="#3390e0" />
            <path d="M0 16l12 12H0z" fill="#4ba3ec" />
          </svg>
        </button>
        <button type="button" aria-label="LibreOffice Calc" className="flex h-[42px] w-12 items-center justify-center border-t-[3px] border-[#7cc1e3] bg-[#b1d6eb]"><CalcDoc /></button>
      </div>
      <div className="ml-auto flex items-center">
        <button type="button" aria-label="HP" className="flex w-[30px] justify-center">
          <svg width="22" height="22" viewBox="0 0 22 22">
            <circle cx="11" cy="11" r="11" fill="#0b5ea8" />
            <text x="11" y="16" textAnchor="middle" fontSize="16" fontStyle="italic" fontWeight="700" fill="#fff" fontFamily="Open Sans, sans-serif">hp</text>
          </svg>
        </button>
        <button type="button" aria-label="Zwischenablage" className="flex w-[30px] justify-center">{ico.paste}</button>
        <button type="button" aria-label="Lautstärke" className="flex w-[30px] justify-center">
          <Ic><path d="M0 5h2v6H0zM3 5l5-5v16l-5-5z" fill={INK} stroke="none" /><path d="M10 5q2 3 0 6M12 2.500q4 5.500 0 11" /></Ic>
        </button>
        <button type="button" aria-label="Netzwerk" className="flex w-[30px] justify-center">
          <Ic><path d="M5 1.5h10.5v10H3.500V7M.5.5h3v5h-3zM2 5.5v5" /><path d="M6 12h5v2h3v2H3v-2h3z" fill={INK} stroke="none" /></Ic>
        </button>
        <button type="button" aria-label="Weitere Symbole" className="flex w-[26px] justify-center">
          <svg width="12" height="6" viewBox="0 0 12 6"><path d="M6 0l6 6H0z" fill={INK} /></svg>
        </button>
        <button type="button" className="flex w-[88px] flex-col items-center">
          <span className="text-[24px] leading-6">11:09</span>
          <span className="text-[19px] leading-[18px]">13.12.20</span>
        </button>
        <button type="button" aria-label="Arbeitsfläche anzeigen" className="ml-[10px] flex h-6 w-6 flex-col justify-end border border-[#232629] p-[2px]">
          <span className="h-px w-full bg-[#232629]" />
        </button>
      </div>
    </div>
  );
}

export default function App() {
  return (
    <div className="relative flex h-screen flex-col overflow-hidden bg-[#eff0f1] font-['Noto_Sans',sans-serif] text-[13px] leading-[18px] text-[#232629]">
      <TitleBar />
      <MenuBar />
      <div className="flex h-10 shrink-0 items-center pl-[3px]"><Tools items={standardTools} /></div>
      <div className="flex h-[39px] shrink-0 items-center pb-px pl-[5px]">
        <Combo label="Schriftname" value="Arial" italic className="w-[160px]" />
        <Combo label="Schriftgröße" value="10 pt" className="ml-[10px] mr-px w-[76px]" />
        <Tools items={formatTools} />
      </div>

      <div className="flex min-h-0 flex-1">
        <div className="flex min-w-0 flex-1 flex-col">
          <div className="flex h-[34px] shrink-0 items-center pl-[5px] pr-px">
            <Combo label="Namenfeld" value="H1" className="w-[160px]" />
            <div className="mx-1 h-[22px] w-px bg-[#c3c5c6]" />
            <button type="button" aria-label="Funktionsassistent" className="flex w-[30px] justify-center"><FxIcon size={14} /></button>
            <button type="button" aria-label="Summe" className="flex w-4 justify-center"><Ic size={14}><path d="M14 3V.5H1.5L8 8l-6.5 7.5H14V13" /></Ic></button>
            <button type="button" aria-label="Summe, Auswahl" className="ml-1 flex w-3 justify-center"><Triangle /></button>
            <button type="button" aria-label="Formel" className="ml-[6px] mr-1 flex w-4 justify-center"><svg width="8" height="5" viewBox="0 0 8 5"><path d="M0 .5h8M0 4.5h8" stroke={INK} /></svg></button>
            <input type="text" aria-label="Eingabezeile" className="h-[26px] min-w-0 flex-1 border border-[#9fa1a3] bg-[#fcfcfc] px-2" />
            <button type="button" aria-label="Eingabezeile erweitern" className="flex w-[26px] justify-center pr-[6px]">
              <svg width="12" height="7" viewBox="0 0 12 7"><path d="M0 0h12L6 7z" fill={INK} /></svg>
            </button>
          </div>

          <div className="flex min-h-0 flex-1">
            <main className="relative min-w-0 flex-1 overflow-hidden border-b border-t border-b-[#d4d6d6] border-t-[#9fa1a3]">
              <Grid />
              <Chart />
              <Formula />
              <button type="button" className="absolute left-[788px] top-[560px] h-[22px] w-[126px] border-b-2 border-r-2 border-[#232629] bg-[#eff0f1] font-['Liberation_Sans',Arial,sans-serif] leading-5">
                Eingabe n und c
              </button>
            </main>
            <VerticalScrollbar />
          </div>

          <div className="flex h-[21px] shrink-0 items-center pl-[7px] pr-[21px]">
            <div className="h-[6px] flex-1 rounded-l-full bg-[#b2b4b5]">
              <div className="h-full w-[48%] rounded-full bg-[#808183]" />
            </div>
            <div className="flex h-full w-[5px] items-center justify-center bg-[#a0a2a4]"><div className="h-[11px] w-px bg-black" /></div>
          </div>
          <SheetTabs />
        </div>
        <Sidebar />
      </div>

      <StatusBar />
      <Taskbar />

      <div role="tooltip" className="absolute left-[381px] top-20 z-20 rounded-[2px] border border-[#3b4045] bg-[#232629] px-1 py-[3px] text-[#fcfcfc] shadow-[0_3px_10px_rgba(0,0,0,0.35)]">
        Format übertragen (Doppelklick für Mehrfachauswahl)
      </div>
    </div>
  );
}
